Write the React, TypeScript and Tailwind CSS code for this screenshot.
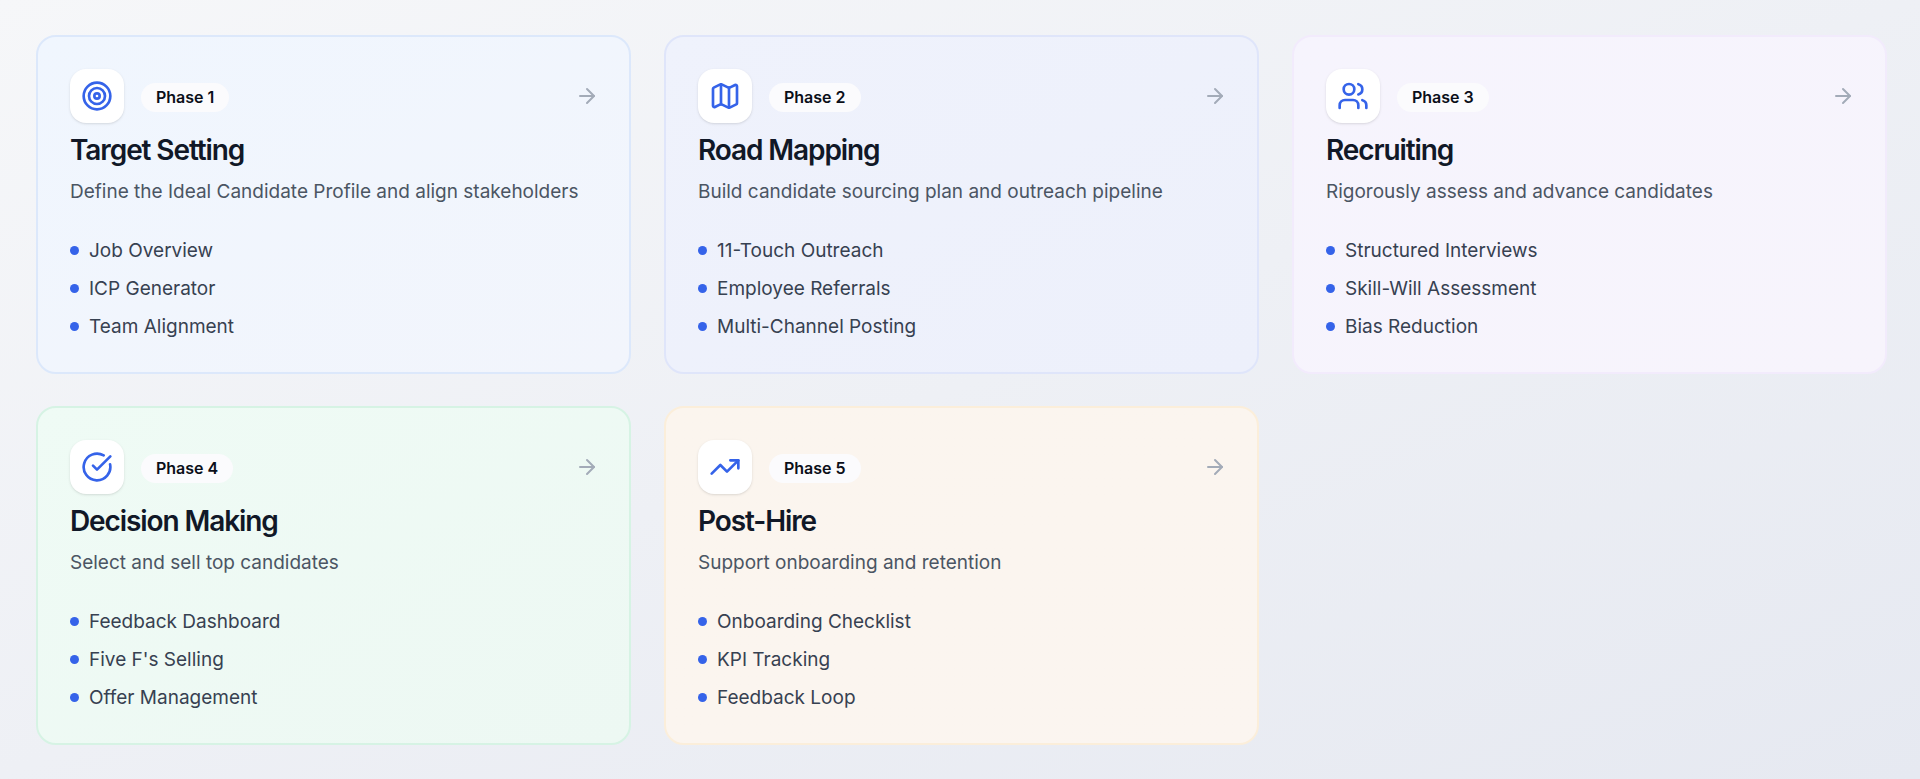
import { Target, Map, Users, CircleCheckBig, TrendingUp, ArrowRight } from "lucide-react";

const cards = [
  { icon: Target, phase: "Phase 1", title: "Target Setting", desc: "Define the Ideal Candidate Profile and align stakeholders", items: ["Job Overview", "ICP Generator", "Team Alignment"], cls: "from-[#f0f6fe] to-[#f2f5fc] border-[#dce8fb]" },
  { icon: Map, phase: "Phase 2", title: "Road Mapping", desc: "Build candidate sourcing plan and outreach pipeline", items: ["11-Touch Outreach", "Employee Referrals", "Multi-Channel Posting"], cls: "from-[#eff2fc] to-[#edf0fb] border-[#dfe5fa]" },
  { icon: Users, phase: "Phase 3", title: "Recruiting", desc: "Rigorously assess and advance candidates", items: ["Structured Interviews", "Skill-Will Assessment", "Bias Reduction"], cls: "from-[#f6f4fd] to-[#f7f4fc] border-[#f2ebfc]" },
  { icon: CircleCheckBig, phase: "Phase 4", title: "Decision Making", desc: "Select and sell top candidates", items: ["Feedback Dashboard", "Five F's Selling", "Offer Management"], cls: "from-[#effbf5] to-[#edf8f3] border-[#d6f3e4]" },
  { icon: TrendingUp, phase: "Phase 5", title: "Post-Hire", desc: "Support onboarding and retention", items: ["Onboarding Checklist", "KPI Tracking", "Feedback Loop"], cls: "from-[#fbf5ee] to-[#fbf5f0] border-[#fbeeda]" },
];

export default function App() {
  return (
    <div className="h-[779px] overflow-hidden bg-gradient-to-br from-[#f6f7f9] to-[#e6e9f1] pl-[36px] pr-[33px] pt-[35px] font-['Inter',sans-serif]">
      <div className="grid grid-cols-[595px_595px_595px] gap-x-[33px] gap-y-[32px]">
        {cards.map((c) => (
          <div key={c.title} className={`h-[339px] rounded-[20px] border-2 bg-gradient-to-br px-[32px] pt-[32px] ${c.cls}`}>
            <div className="flex items-center justify-between">
              <div className="flex items-center gap-[17px]">
                <div className="flex h-[54px] w-[54px] items-center justify-center rounded-2xl bg-white shadow-sm">
                  <c.icon size={32} strokeWidth={2} className="text-[#3563e9]" />
                </div>
                <span className="mt-[2px] flex h-[29px] items-center rounded-full bg-[#fbfbfd] px-[15px] text-[16px] font-semibold text-[#0b0f19]">{c.phase}</span>
              </div>
              <ArrowRight size={24} strokeWidth={2} className="mr-[-2px] text-[#a3abb8]" />
            </div>
            <h2 className="mt-[7px] text-[28px] font-semibold leading-[40px] tracking-[-1.1px] text-[#111827]">{c.title}</h2>
            <p className="mt-[8px] text-[19px] leading-[28px] text-[#4b5563]">{c.desc}</p>
            <ul className="mt-[31px] flex flex-col gap-[10px]">
              {c.items.map((it) => (
                <li key={it} className="flex h-[28px] items-center gap-[10px] text-[19px] text-[#374151]">
                  <span className="mb-[2px] h-[9px] w-[9px] rounded-full bg-[#3563e9]" />
                  {it}
                </li>
              ))}
            </ul>
          </div>
        ))}
      </div>
    </div>
  );
}
